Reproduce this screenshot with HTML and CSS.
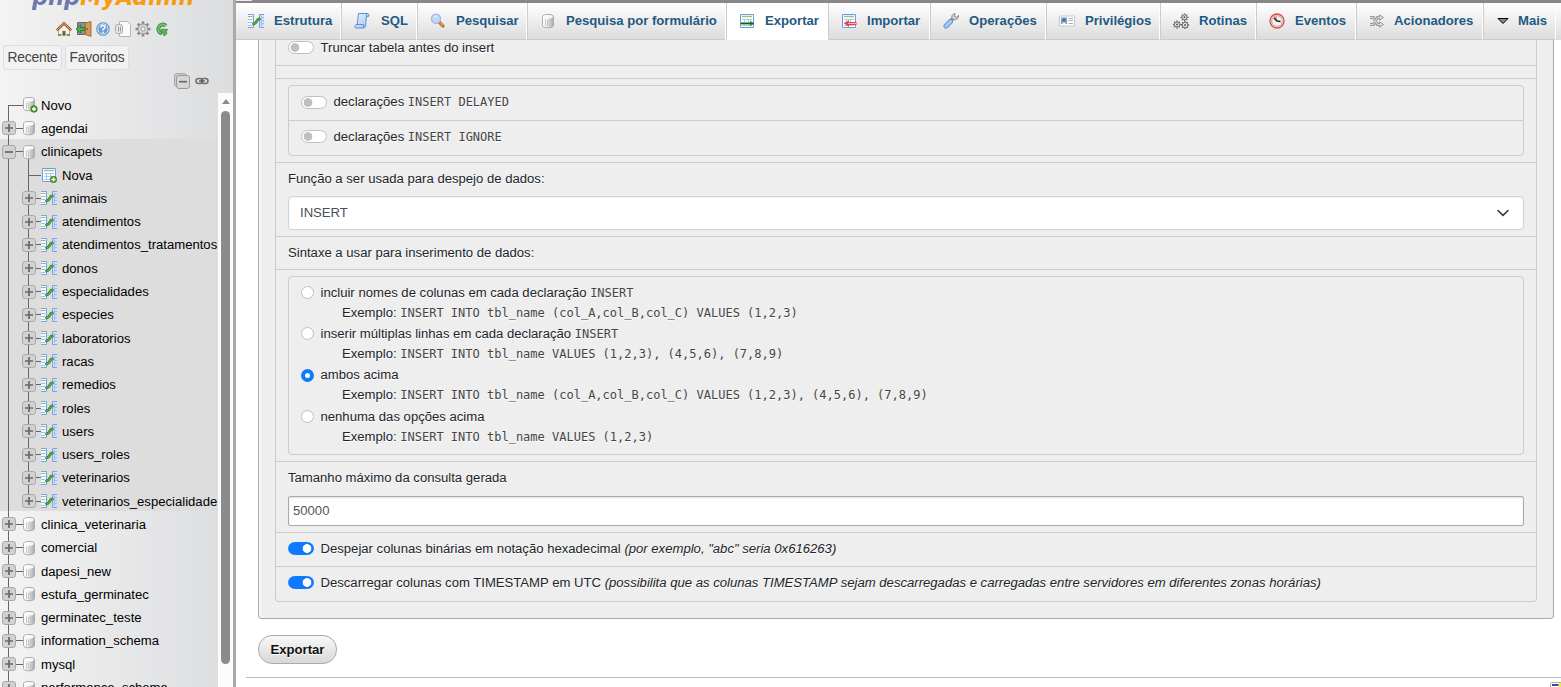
FILE: index.html
```html
<!DOCTYPE html>
<html lang="pt-BR">
<head>
<meta charset="utf-8">
<title>phpMyAdmin</title>
<link rel="stylesheet" href="styles.css">
</head>
<body>
<svg class="sprites" width="0" height="0">
  <defs>
    <linearGradient id="gdb" x1="0" x2="1"><stop offset="0" stop-color="#fff"/><stop offset=".35" stop-color="#f2f2f2"/><stop offset="1" stop-color="#a8a8a8"/></linearGradient>
    <linearGradient id="gblue" x1="0" y1="0" x2="1" y2="1"><stop offset="0" stop-color="#e8f2ff"/><stop offset="1" stop-color="#9fc3ef"/></linearGradient>
  </defs>
  <symbol id="db" viewBox="0 0 16 16"><path d="M2.500 3.500C2.500 .8 13.500 .8 13.500 3.500V12.500C13.500 15.500 2.500 15.500 2.500 12.500Z" fill="url(#gdb)" stroke="#adadad"/><ellipse cx="8" cy="3.700" rx="4.800" ry="1.800" fill="#fafafa"/><path d="M5.500 6.500V13M7.500 7V13M9.500 7V13" stroke="#c8c8c8"/></symbol>
  <symbol id="dbnew" viewBox="0 0 16 16"><use href="#db" x="-1" y="-1" width="16" height="16"/><circle cx="12" cy="12" r="3.300" fill="#4f9a2c" stroke="#37761a" stroke-width=".7"/><path d="M12 10V14M10 12H14" stroke="#fff" stroke-width="1.300"/></symbol>
  <symbol id="tbl" viewBox="0 0 16 16"><path d="M1.500 1.500H14.500V14.500H1.500Z" fill="#fff" stroke="#6f9bdc"/><path d="M3 3.500H13" stroke="#8fcb80" stroke-width="1.500"/><path d="M3 6.500H13M3 9.500H13M3 12.500H13M5.500 6V13M9.500 6V13" stroke="#a9c7f0"/></symbol>
  <symbol id="tblnew" viewBox="0 0 16 16"><use href="#tbl" width="16" height="16"/><circle cx="12.500" cy="12.500" r="3.200" fill="#4f9a2c" stroke="#37761a" stroke-width=".7"/><path d="M12.500 10.500V14.500M10.500 12.500H14.500" stroke="#fff" stroke-width="1.300"/></symbol>
  <symbol id="props" viewBox="0 0 16 16"><path d="M0 1.500H5.500V14.500H0Z" fill="#f4f8ff"/><path d="M16 1.500H11.500V14.500H16Z" fill="#cfe0fa"/><path d="M0 1.500H5.500V14.500H0M16 1.500H11.500V14.500H16" fill="none" stroke="#7ba4dd"/><path d="M0 3.500H4.500" stroke="#80c56d"/><path d="M0 6.500H4.500M0 9.500H4M0 12.500H4M13 4.500H16M13 7.500H16M13 10.500H16M13.500 3V13" stroke="#9dbdea"/><path d="M4.500 11.500L7.500 10L10 6.500L12.500 5.500" fill="none" stroke="#35812f" stroke-width="2.800"/><path d="M4.500 11.500L7.500 10L10 6.500L12.500 5.500" fill="none" stroke="#62ad55" stroke-width="1.200"/></symbol>
  <symbol id="plus" viewBox="0 0 14 14"><rect x=".5" y=".5" width="13" height="13" rx="2.500" fill="#d2d2d2" stroke="#a9a9a9"/><path d="M3 7H11M7 3V11" stroke="#686868" stroke-width="1.700"/></symbol>
  <symbol id="minus" viewBox="0 0 14 14"><rect x=".5" y=".5" width="13" height="13" rx="2.500" fill="#d2d2d2" stroke="#a9a9a9"/><path d="M3 7H11" stroke="#686868" stroke-width="1.700"/></symbol>
  <symbol id="home" viewBox="0 0 16 16"><path d="M2.500 8L8 3L13.500 8V14H2.500Z" fill="#f5f0e7" stroke="#b5aa98"/><path d="M.8 9.300L8 2.300L15.200 9.300" fill="none" stroke="#9a632a" stroke-width="2.600"/><path d="M1 9L8 2.100L15 9" fill="none" stroke="#dba766"/><path d="M6.500 10H9.500V14.500H6.500Z" fill="#6b5a46"/><path d="M2 14H5M11 14H14" stroke="#58a747" stroke-width="2"/></symbol>
  <symbol id="exit" viewBox="0 0 16 16"><path d="M1.500 1.500H10V13.500H1.500Z" fill="#8d8d8d" stroke="#6a6a6a"/><path d="M9.500 2L15 .5V15.500L9.500 13.500Z" fill="#d39a5b" stroke="#a4703a"/><path d="M0 8L4.500 4V6.500H9V9.500H4.500V12Z" fill="#53ad50" stroke="#25732a" stroke-width=".8"/><circle cx="11.200" cy="8" r=".8" fill="#604016"/></symbol>
  <symbol id="help" viewBox="0 0 16 16"><circle cx="8" cy="8" r="6.500" fill="#4c83c7" stroke="#86a8d2"/><circle cx="8" cy="8" r="5.200" fill="#6b9ad4" stroke="#dfeafa"/><path d="M6 6.500Q6 4.500 8 4.500T10 6.300Q10 7.300 8 8.300V9.500M8 10.800V12.200" fill="none" stroke="#fff" stroke-width="1.500"/></symbol>
  <symbol id="docs" viewBox="0 0 16 16"><path d="M4.500 .5H12.500L15.500 3.500V15.500H4.500Z" fill="#fafafa" stroke="#b4b4b4"/><rect x=".5" y="3.500" width="7" height="9" rx="2" fill="#e8e8e8" stroke="#aaa"/><path d="M3.500 5.500V10.500M5.500 5.500V10.500" stroke="#999"/></symbol>
  <symbol id="cog" viewBox="0 0 16 16"><path d="M8 .5V15.500M.5 8H15.500M2.700 2.700L13.300 13.300M13.300 2.700L2.700 13.300" stroke="#8a8a8a" stroke-width="2.600"/><circle cx="8" cy="8" r="5" fill="#d8d8d8" stroke="#979797"/><circle cx="8" cy="8" r="2.200" fill="#f2f2f2" stroke="#999"/></symbol>
  <symbol id="reload" viewBox="0 0 16 16"><path d="M12 4.700A4.600 4.600 0 1 0 7.500 12.500" fill="none" stroke="#35883a" stroke-width="3.800"/><path d="M12 4.700A4.600 4.600 0 1 0 7.500 12.500" fill="none" stroke="#71c46b" stroke-width="2"/><path d="M7.500 8L14 8.500L12 10L13 12.500L10 15L9 12L7 13Z" fill="#5bb357" stroke="#35883a" stroke-width=".7"/></symbol>
  <symbol id="sql" viewBox="0 0 16 16"><path d="M4.500 .5H14Q15.800 1.500 14.500 3.500H12.500L11.500 13Q11 15.500 9 15H1.500Q-.2 12.500 2 11.500H3.200Z" fill="url(#gblue)" stroke="#5d93d4"/><path d="M12.500 3.500Q11.500 1.500 13.500 .8M2 11.500H9.500V14.500" fill="none" stroke="#5d93d4"/></symbol>
  <symbol id="search" viewBox="0 0 16 16"><path d="M9.500 9.500L13 13" stroke="#b87534" stroke-width="3.200" stroke-linecap="round"/><path d="M10.500 10L13 12.500" stroke="#e3a865" stroke-width="1.200"/><circle cx="6" cy="5.800" r="4.600" fill="#b9d8fa" stroke="#a3b9d7" stroke-width="1.200"/><path d="M3.500 5Q4.500 3 7 3" fill="none" stroke="#fff"/></symbol>
  <symbol id="export" viewBox="0 0 16 16"><use href="#tbl"/><path d="M1 9.500H11V7.500L15.500 10.500L11 13.500V11.500H1Z" fill="#3f983b"/><path d="M2 10.500H14.500" stroke="#1b5c1d"/></symbol>
  <symbol id="import" viewBox="0 0 16 16"><use href="#tbl"/><path d="M15.500 9H8V7L3 10.500L8 14V12H15.500Z" fill="#f24141"/><path d="M7 10.500H15" stroke="#ffb5b5"/></symbol>
  <symbol id="wrench" viewBox="0 0 16 16"><path d="M7.500 8L11 4.500" stroke="#969696" stroke-width="3.600"/><path d="M12 .5Q8 1.500 9 5.500Q12 8.500 15.500 4.500V2.500L13.300 4.300L11.500 3.500Z" fill="#d4d4d4" stroke="#8b8b8b"/><path d="M3 13L7.500 8.500" stroke="#5989cd" stroke-width="5" stroke-linecap="round"/><path d="M3 13L7.500 8.500" stroke="#a5c9f5" stroke-width="3.200" stroke-linecap="round"/></symbol>
  <symbol id="card" viewBox="0 0 16 16"><path d="M.5 3H15.500V13H.5Z" fill="#fff" stroke="#c6c6c6"/><path d="M2 4.500H8V11H2Z" fill="#6ba3e0"/><circle cx="5" cy="7" r="1.500" fill="#91522c"/><path d="M3 11Q5 7 7 11" fill="#d9eafa"/><path d="M9.500 5.500H14M9.500 7.500H14M9.500 10.500H14" stroke="#9fb2c8"/></symbol>
  <symbol id="gears" viewBox="0 0 16 16"><g fill="none" stroke="#5e5e5e"><path d="M11.500 .5V8M7.500 4.300H15.500M8.800 1.600L14.200 7M14.200 1.600L8.800 7M4 7.500V15.500M0 11.500H8M1.300 8.800L6.700 14.200M6.700 8.800L1.300 14.200M12 8V16M8 12H16M9.200 9.200L14.800 14.800M14.800 9.200L9.200 14.800" stroke-width="1.300"/></g><g fill="#ececec" stroke="#777"><circle cx="11.500" cy="4.300" r="2.500"/><circle cx="4" cy="11.500" r="2.500"/><circle cx="12" cy="12" r="2.700"/></g><g fill="#555"><circle cx="11.500" cy="4.300" r="1"/><circle cx="4" cy="11.500" r="1"/><circle cx="12" cy="12" r="1"/></g></symbol>
  <symbol id="clock" viewBox="0 0 16 16"><circle cx="8" cy="8" r="7" fill="#ddd" stroke="#ea4a4a" stroke-width="1.300"/><circle cx="8" cy="8" r="5.300" fill="#f1f1f1" stroke="#b5b5b5"/><path d="M8 8L4 4L8 3Z" fill="#ef9d9d"/><path d="M5 5L8 8L11.500 8.500" fill="none" stroke="#222" stroke-width="1.500"/></symbol>
  <symbol id="trigger" viewBox="0 0 16 16"><path d="M1 4.500H4.500L8.500 11.500H12M1 11.500H4.500L8.500 4.500H12" fill="none" stroke="#969a96" stroke-width="3"/><path d="M10.500 1.800L14.500 4.500L10.500 7.200ZM10.500 8.800L14.500 11.500L10.500 14.200Z" fill="#ddd" stroke="#969a96"/><path d="M1 4.500H4.500L8.500 11.500H12M1 11.500H4.500L8.500 4.500H12" fill="none" stroke="#dedede"/></symbol>
</svg>

<div class="app">
  <aside class="sidebar">
    <svg class="logo" width="170" height="14" viewBox="0 0 170 14"><text class="php" x="0" y="4.500" textLength="48" lengthAdjust="spacingAndGlyphs">php</text><text class="mya" x="48" y="4.500" textLength="114" lengthAdjust="spacingAndGlyphs">MyAdmin</text></svg>
    <div class="quick"><svg><use href="#home"/></svg><svg><use href="#exit"/></svg><svg><use href="#help"/></svg><svg><use href="#docs"/></svg><svg><use href="#cog"/></svg><svg><use href="#reload"/></svg></div>
    <div class="recents"><span>Recente</span><span>Favoritos</span></div>
    <div class="treetools">
      <svg width="16" height="16" viewBox="0 0 16 16"><rect x=".5" y=".5" width="12" height="13" rx="2.500" fill="#ccc" stroke="#aaa"/><rect x="2.500" y="2.500" width="13" height="13" rx="2.500" fill="#d6d6d6" stroke="#999"/><path d="M5 8.700H13" stroke="#666" stroke-width="1.600"/></svg>
      <svg width="14" height="8" viewBox="0 0 14 8"><rect x="1" y="1.500" width="6.500" height="5" rx="2.500" fill="none" stroke="#707070" stroke-width="1.600"/><rect x="6.500" y="1.500" width="6.500" height="5" rx="2.500" fill="none" stroke="#707070" stroke-width="1.600"/><path d="M4 4H10" stroke="#555" stroke-width="1.300"/></svg>
    </div>
    <div class="treewrap">
      <div class="tree">
        <div class="row first"><i></i><svg class="db"><use href="#dbnew"/></svg><span>Novo</span></div>
        <div class="row"><svg class="box"><use href="#plus"/></svg><i></i><svg class="db"><use href="#db"/></svg><span>agendai</span></div>
        <div class="open">
          <div class="row parent"><svg class="box"><use href="#minus"/></svg><i></i><svg class="db"><use href="#db"/></svg><span>clinicapets</span></div>
          <div class="row sub new"><i></i><svg class="tb"><use href="#tblnew"/></svg><span>Nova</span></div>
          <div class="row sub"><svg class="box"><use href="#plus"/></svg><i></i><svg class="tb"><use href="#props"/></svg><span>animais</span></div>
          <div class="row sub"><svg class="box"><use href="#plus"/></svg><i></i><svg class="tb"><use href="#props"/></svg><span>atendimentos</span></div>
          <div class="row sub"><svg class="box"><use href="#plus"/></svg><i></i><svg class="tb"><use href="#props"/></svg><span>atendimentos_tratamentos</span></div>
          <div class="row sub"><svg class="box"><use href="#plus"/></svg><i></i><svg class="tb"><use href="#props"/></svg><span>donos</span></div>
          <div class="row sub"><svg class="box"><use href="#plus"/></svg><i></i><svg class="tb"><use href="#props"/></svg><span>especialidades</span></div>
          <div class="row sub"><svg class="box"><use href="#plus"/></svg><i></i><svg class="tb"><use href="#props"/></svg><span>especies</span></div>
          <div class="row sub"><svg class="box"><use href="#plus"/></svg><i></i><svg class="tb"><use href="#props"/></svg><span>laboratorios</span></div>
          <div class="row sub"><svg class="box"><use href="#plus"/></svg><i></i><svg class="tb"><use href="#props"/></svg><span>racas</span></div>
          <div class="row sub"><svg class="box"><use href="#plus"/></svg><i></i><svg class="tb"><use href="#props"/></svg><span>remedios</span></div>
          <div class="row sub"><svg class="box"><use href="#plus"/></svg><i></i><svg class="tb"><use href="#props"/></svg><span>roles</span></div>
          <div class="row sub"><svg class="box"><use href="#plus"/></svg><i></i><svg class="tb"><use href="#props"/></svg><span>users</span></div>
          <div class="row sub"><svg class="box"><use href="#plus"/></svg><i></i><svg class="tb"><use href="#props"/></svg><span>users_roles</span></div>
          <div class="row sub"><svg class="box"><use href="#plus"/></svg><i></i><svg class="tb"><use href="#props"/></svg><span>veterinarios</span></div>
          <div class="row sub last"><svg class="box"><use href="#plus"/></svg><i></i><svg class="tb"><use href="#props"/></svg><span>veterinarios_especialidade</span></div>
        </div>
        <div class="row"><svg class="box"><use href="#plus"/></svg><i></i><svg class="db"><use href="#db"/></svg><span>clinica_veterinaria</span></div>
        <div class="row"><svg class="box"><use href="#plus"/></svg><i></i><svg class="db"><use href="#db"/></svg><span>comercial</span></div>
        <div class="row"><svg class="box"><use href="#plus"/></svg><i></i><svg class="db"><use href="#db"/></svg><span>dapesi_new</span></div>
        <div class="row"><svg class="box"><use href="#plus"/></svg><i></i><svg class="db"><use href="#db"/></svg><span>estufa_germinatec</span></div>
        <div class="row"><svg class="box"><use href="#plus"/></svg><i></i><svg class="db"><use href="#db"/></svg><span>germinatec_teste</span></div>
        <div class="row"><svg class="box"><use href="#plus"/></svg><i></i><svg class="db"><use href="#db"/></svg><span>information_schema</span></div>
        <div class="row"><svg class="box"><use href="#plus"/></svg><i></i><svg class="db"><use href="#db"/></svg><span>mysql</span></div>
        <div class="row"><svg class="box"><use href="#plus"/></svg><i></i><svg class="db"><use href="#db"/></svg><span>performance_schema</span></div>
      </div>
      <div class="scroll"><b></b><em></em></div>
    </div>
  </aside>
  <div class="resizer"></div>
  <main class="main">
    <div class="crumbs"><i></i></div>
    <nav class="tabs">
      <a><svg><use href="#props"/></svg>Estrutura</a>
      <a><svg><use href="#sql"/></svg>SQL</a>
      <a><svg><use href="#search"/></svg>Pesquisar</a>
      <a><svg><use href="#db"/></svg>Pesquisa por formulário</a>
      <a class="active"><svg><use href="#export"/></svg>Exportar</a>
      <a><svg><use href="#import"/></svg>Importar</a>
      <a><svg><use href="#wrench"/></svg>Operações</a>
      <a><svg><use href="#card"/></svg>Privilégios</a>
      <a><svg><use href="#gears"/></svg>Rotinas</a>
      <a><svg><use href="#clock"/></svg>Eventos</a>
      <a><svg><use href="#trigger"/></svg>Acionadores</a>
      <a class="more"><svg viewBox="0 0 12 8"><path d="M1 1.500H11L6 6.500Z" fill="#888" stroke="#000"/></svg>Mais</a>
      <span class="rest"></span>
    </nav>
    <section class="panel">
      <div class="list">
        <div class="item truncate"><span class="switch"></span>Truncar tabela antes do insert</div>
        <div class="item empty"></div>
        <div class="item nest">
          <div class="group">
            <div class="line"><span class="switch"></span>declarações <code>INSERT DELAYED</code></div>
            <div class="line"><span class="switch"></span>declarações <code>INSERT IGNORE</code></div>
          </div>
        </div>
        <div class="item func"><label>Função a ser usada para despejo de dados:</label>
          <div class="select">INSERT<svg width="12" height="8" viewBox="0 0 12 8"><path d="M1 1.500L6 6.300L11 1.500" fill="none" stroke="#343a40" stroke-width="1.600" stroke-linecap="round" stroke-linejoin="round"/></svg></div>
        </div>
        <div class="item syntax">Sintaxe a usar para inserimento de dados:</div>
        <div class="item choices">
          <div class="group radios">
            <div class="opt"><span class="radio"></span><span>incluir nomes de colunas em cada declaração <code>INSERT</code></span></div>
            <div class="ex">Exemplo: <code>INSERT INTO tbl_name (col_A,col_B,col_C) VALUES (1,2,3)</code></div>
            <div class="opt"><span class="radio"></span><span>inserir múltiplas linhas em cada declaração <code>INSERT</code></span></div>
            <div class="ex">Exemplo: <code>INSERT INTO tbl_name VALUES (1,2,3), (4,5,6), (7,8,9)</code></div>
            <div class="opt"><span class="radio on"></span><span>ambos acima</span></div>
            <div class="ex">Exemplo: <code>INSERT INTO tbl_name (col_A,col_B,col_C) VALUES (1,2,3), (4,5,6), (7,8,9)</code></div>
            <div class="opt"><span class="radio"></span><span>nenhuma das opções acima</span></div>
            <div class="ex">Exemplo: <code>INSERT INTO tbl_name VALUES (1,2,3)</code></div>
          </div>
        </div>
        <div class="item size"><label>Tamanho máximo da consulta gerada</label><div class="input">50000</div></div>
        <div class="item check hex"><span class="switch on"></span><span>Despejar colunas binárias em notação hexadecimal <em>(por exemplo, "abc" seria 0x616263)</em></span></div>
        <div class="item check"><span class="switch on"></span><span>Descarregar colunas com TIMESTAMP em UTC <em>(possibilita que as colunas TIMESTAMP sejam descarregadas e carregadas entre servidores em diferentes zonas horárias)</em></span></div>
      </div>
    </section>
    <button class="submit">Exportar</button>
    <footer class="foot"><svg width="11" height="9" viewBox="0 0 11 9"><rect x=".5" y=".5" width="14" height="12" rx="1" fill="#fff" stroke="#aaa"/><path d="M2 3H9" stroke="#254f9c" stroke-width="2"/><circle cx="10.500" cy="3" r="2.200" fill="#f5e93a"/></svg></footer>
  </main>
</div>
</body>
</html>
```

FILE: styles.css
```css
* { box-sizing: border-box; }
body { margin: 0; height: 687px; overflow: hidden; font: 13.12px/20px "Liberation Sans", Arial, sans-serif; color: #212529; background: #fff; }
svg { display: block; flex: none; }
.sprites { position: absolute; }
.app { display: flex; height: 687px; }

.sidebar { width: 233px; height: 687px; overflow: hidden; display: flex; flex-direction: column; background: linear-gradient(to right, #f3f3f3, #dcdddf); color: #000; }
.logo { margin-left: 32px; height: 14px; }
.logo text { font-family: "DejaVu Sans", sans-serif; font-style: italic; font-weight: bold; font-size: 23px; }
.php { fill: #6c78af; }
.mya { fill: #f89c0e; }
.quick { display: flex; gap: 3.700px; padding: 7px 0 0 56px; height: 31px; }
.quick svg { width: 16px; height: 16px; }
.recents { display: flex; gap: 3px; padding-left: 3px; height: 25px; color: #444; font-size: 13.120px; }
.recents span { height: 25px; line-height: 24px; border: 1px solid #ddd; border-radius: 3px; background: #f2f2f2; white-space: nowrap; text-align: center; width: 59px; }
.recents span + span { width: 64px; }
.recents { font-size: 13.800px; letter-spacing: -.2px; }
.treetools { display: flex; align-items: center; gap: 5px; height: 22px; padding: 0 0 0 174px; }
.treewrap { display: flex; flex: 1; min-height: 0; }
.tree { width: 218px; overflow: hidden; }
.row { height: 23.310px; display: flex; align-items: center; padding: 3px 0 0 2px; white-space: nowrap; background: linear-gradient(#666, #666) 8px 0 / 1px 100% no-repeat; }
.row i { width: 7px; height: 1px; background: #666; flex: none; }
.row .box { width: 14px; height: 14px; }
.row svg.db { width: 16px; height: 16px; margin: 0 -1px 0 -2px; }
.row .tb { width: 16px; height: 16px; }
.row span { margin-left: 5px; padding-top: 1px; }
.row.first { padding-left: 8px; background-position: 8px 13px; }
.row.first i { width: 15px; }
.row.first svg.db { margin: 0 -2px 0 -1px; }
.open { background: #ddd; }
.row.parent { background: linear-gradient(#666, #666) 8px 0 / 1px 100% no-repeat, linear-gradient(#666, #666) 28px 18px / 1px 6px no-repeat; }
.row.sub { padding-left: 22px; background: linear-gradient(#666, #666) 8px 0 / 1px 100% no-repeat, linear-gradient(#666, #666) 28px 0 / 1px 100% no-repeat; }
.row.sub i { width: 5px; }
.row.sub.new { padding-left: 28px; }
.row.sub.new i { width: 13px; }
.row.sub.last { background: linear-gradient(#666, #666) 8px 0 / 1px 100% no-repeat, linear-gradient(#666, #666) 28px 0 / 1px 12px no-repeat; }
.scroll { width: 15px; margin-top: 1px; background: #fcfcfc; display: flex; flex-direction: column; align-items: center; padding-top: 6px; }
.scroll b { border: 4.500px solid transparent; border-top: 0; border-bottom: 5px solid #8b8b8b; }
.scroll em { width: 9px; height: 553px; margin-top: 7px; border-radius: 5px; background: #8b8b8b; }
.resizer { width: 3px; background: #aaa; }

.main { width: 1325px; height: 687px; overflow: hidden; }
.crumbs { height: 3px; background: #888; }
.crumbs i { display: block; width: 16px; height: 1px; background: #eee; }
.tabs { display: flex; height: 37px; background: #fff; }
.tabs a { display: flex; align-items: center; gap: 10px; padding: 0 0 1px 12px; border-left: 1px solid #ccc; border-right: 1px solid #fff; border-bottom: 1px solid #ccc; background: linear-gradient(#fff, #dcdcdc); color: #235a81; font-weight: bold; white-space: nowrap; }
.tabs svg { width: 16px; height: 16px; }
.tabs a:nth-child(1) { width: 105px; border-left: 0; }
.tabs a:nth-child(2) { width: 76px; gap: 11px; }
.tabs a:nth-child(3) { width: 110px; }
.tabs a:nth-child(4) { width: 199px; }
.tabs a:nth-child(5) { width: 102px; }
.tabs a:nth-child(6) { width: 102px; }
.tabs a:nth-child(7) { width: 116px; }
.tabs a:nth-child(8) { width: 114px; }
.tabs a:nth-child(9) { width: 96px; }
.tabs a:nth-child(10) { width: 100px; }
.tabs a:nth-child(11) { width: 127px; gap: 9px; }
.tabs a:nth-child(12) { width: 73px; padding-left: 13px; gap: 9px; }
.tabs .more svg { width: 12px; height: 8px; }
.tabs a.active { background: #fff; border-bottom-color: #fff; }
.tabs .rest { flex: 1; background: linear-gradient(#fff, #dcdcdc); }

.panel { margin-left: 22px; width: 1296px; height: 579px; padding: 0 16px 16px; background: #eee; border: 1px solid #aaa; border-top: 0; border-radius: 0 0 4px 4px; box-shadow: inset 2px 0 2px #fff8; text-shadow: 0 1px 0 #fff; }
.list { border: 1px solid #ccc; border-top: 0; border-radius: 0 0 4px 4px; }
.item { border-bottom: 1px solid #ccc; padding: 0 12px; }
.item:last-child { border-bottom: 0; }
.truncate, .check, .line { display: flex; align-items: center; white-space: pre; }
.truncate { height: 26px; padding-bottom: 10px; }
.empty { height: 13px; }
.nest { height: 84px; padding-top: 6px; }
.group { border: 1px solid #ccc; border-radius: 4px; }
.line { height: 34px; padding: 0 12px 2px; }
.line + .line { height: 35px; padding-bottom: 3px; border-top: 1px solid #ccc; }
.func { height: 74px; padding-top: 6px; }
.func label { display: block; height: 27px; }
.select { height: 34px; display: flex; align-items: center; justify-content: space-between; padding: 0 14px 0 11px; border: 1px solid #ced4da; border-radius: 4px; background: #fff; color: #495057; box-shadow: inset 0 1px 2px #0001; }
.syntax { height: 33px; padding-top: 6px; }
.choices { height: 192px; padding-top: 6px; }
.radios { height: 179px; padding: 5.500px 12px; }
.opt { display: flex; height: 20px; align-items: center; white-space: pre; }
.ex { height: 21.400px; line-height: 20px; padding-left: 41px; white-space: pre; }
.radio { width: 13px; height: 13px; margin-right: 6.500px; border: 1px solid #bfbfbf; border-radius: 50%; background: #fff; }
.radio.on { border: 4px solid #0d7aff; }
.size { height: 71px; padding-top: 6px; }
.size label { display: block; height: 28px; }
.input { height: 30px; line-height: 27px; padding-left: 4px; border: 1px solid #aaa; border-radius: 2px; background: #fff; color: #555; box-shadow: inset 0 1px 2px #ddd; }
.check { height: 34px; padding-bottom: 3px; }
.check.hex { padding-bottom: 2px; }
.switch { width: 26px; height: 13px; margin-right: 6.500px; flex: none; border: 1px solid #bfbfbf; border-radius: 7px; background: radial-gradient(circle at 6px 5.500px, #bfbfbf 4px, #fff 4.700px); }
.switch.on { border-color: #0d7aff; background: radial-gradient(circle at 18px 5.500px, #fff 4px, #0d7aff 4.700px); }
code { font: 12px "DejaVu Sans Mono", monospace; color: #444; }
.submit { display: block; margin: 16px 0 0 22px; width: 79px; height: 29px; padding: 0; font: bold 13.120px "Liberation Sans", Arial, sans-serif; color: #111; border: 1px solid #aaa; border-radius: 14px; background: linear-gradient(#f8f8f8, #d8d8d8); text-shadow: 0 1px 0 #fff; }
.foot { display: flex; justify-content: flex-end; margin: 13px 0 0 10px; padding-top: 4px; border-top: 1px solid #bbb; }
```
